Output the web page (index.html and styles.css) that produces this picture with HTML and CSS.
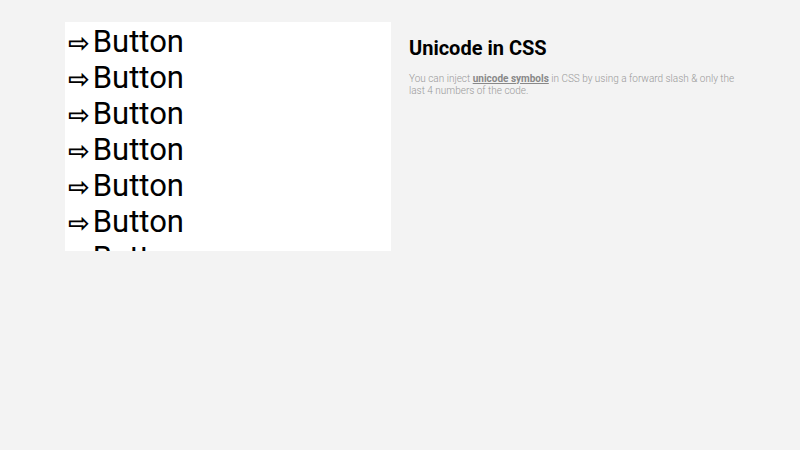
FILE: index.html
```html
<!DOCTYPE html>
<html lang="en">

<head>
    <meta charset="UTF-8">
    <meta name="viewport" content="width=device-width, initial-scale=1.0">
    <title>unicode in css</title>

    <link rel="stylesheet" href="styles.css">
</head>

<body>
    <div class="wrapper">
        <div class="demo">
            <a class="btn" href="#">Button</a>
            <a class="btn" href="#">Button</a>
            <a class="btn" href="#">Button</a>
            <a class="btn" href="#">Button</a>
            <a class="btn" href="#">Button</a>
            <a class="btn" href="#">Button</a>
            <a class="btn" href="#">Button</a>
        </div>

        <div class="info">
            <h2>Unicode in CSS</h2>
            <p>You can inject <a href="#">unicode symbols</a> in CSS by using a forward slash &amp; only the last 4 numbers of the code.</p>
        </div>
    </div>
</body>

</html>
```

FILE: styles.css
```css
* {
    margin: 0;
    padding: 0;
    box-sizing: border-box;
}

body {
    background: #f3f3f3;
    font-family: Roboto, "Liberation Sans", sans-serif;
    color: #000;
}

.wrapper {
    width: 670px;
    margin: 22px auto 0;
    display: grid;
    grid-template-columns: 326px 326px;
    gap: 18px;
}

.demo {
    background: #fff;
    height: 229px;
    overflow: hidden;
    padding: 2px 0 0 3px;
}

.btn {
    display: block;
    font-size: 31px;
    line-height: 36px;
    height: 36px;
    color: #000;
    text-decoration: none;
}

.btn::before {
    content: "\21E8";
    font-family: "DejaVu Sans", sans-serif;
    font-weight: 700;
    font-size: 26px;
    line-height: 0;
    margin-right: 3px;
}

.info {
    padding-top: 14px;
}

.info h2 {
    font-size: 20px;
    font-weight: 700;
    margin-bottom: 13px;
}

.info p {
    font-size: 10px;
    font-weight: 300;
    line-height: 12px;
    color: #999;
}

.info p a {
    color: #888;
    font-weight: 700;
}
```
